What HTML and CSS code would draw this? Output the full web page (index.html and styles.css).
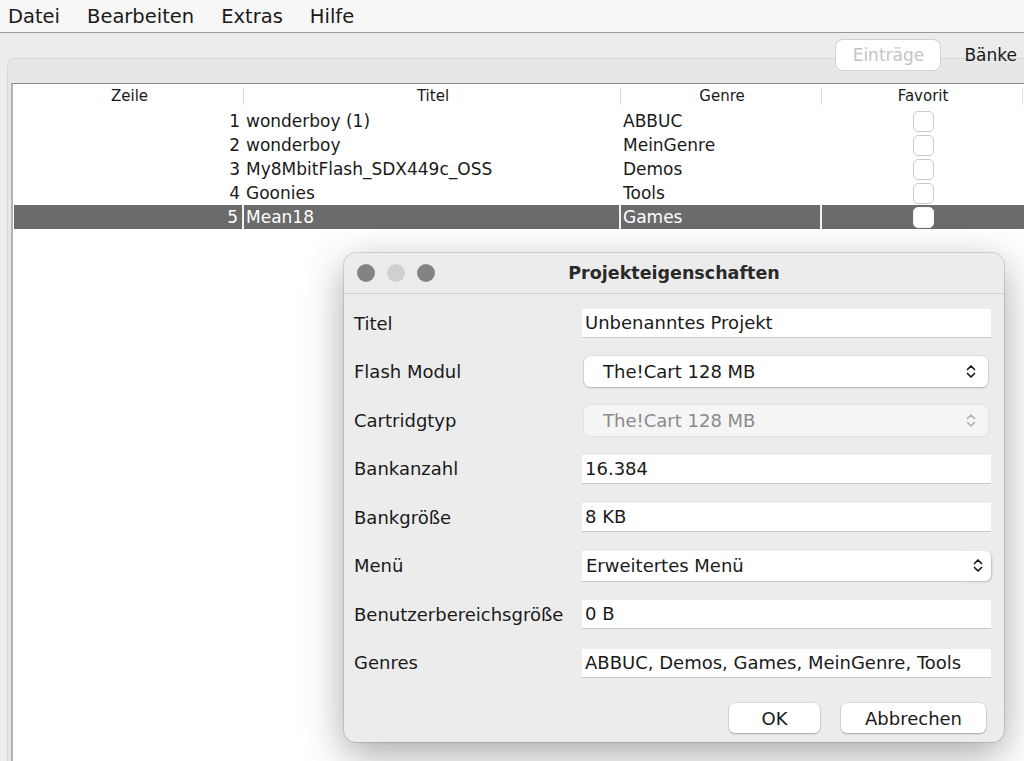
FILE: index.html
```html
<!DOCTYPE html>
<html lang="de">
<head>
    <meta charset="UTF-8">
    <title>Projekt</title>
    <link rel="stylesheet" href="styles.css">
</head>
<body>

<div class="menubar">
    <span>Datei</span>
    <span>Bearbeiten</span>
    <span>Extras</span>
    <span>Hilfe</span>
</div>

<div class="main">
    <div class="pane">
        <div class="tabs">
            <span class="tab active">Einträge</span>
            <span class="tab">Bänke</span>
        </div>

        <div class="table">
            <div class="row head">
                <div class="cell">Zeile</div>
                <div class="cell">Titel</div>
                <div class="cell">Genre</div>
                <div class="cell">Favorit</div>
            </div>
            <div class="row">
                <div class="cell num">1</div>
                <div class="cell">wonderboy (1)</div>
                <div class="cell">ABBUC</div>
                <div class="cell check"><span class="box"></span></div>
            </div>
            <div class="row">
                <div class="cell num">2</div>
                <div class="cell">wonderboy</div>
                <div class="cell">MeinGenre</div>
                <div class="cell check"><span class="box"></span></div>
            </div>
            <div class="row">
                <div class="cell num">3</div>
                <div class="cell">My8MbitFlash_SDX449c_OSS</div>
                <div class="cell">Demos</div>
                <div class="cell check"><span class="box"></span></div>
            </div>
            <div class="row">
                <div class="cell num">4</div>
                <div class="cell">Goonies</div>
                <div class="cell">Tools</div>
                <div class="cell check"><span class="box"></span></div>
            </div>
            <div class="row selected">
                <div class="cell num">5</div>
                <div class="cell">Mean18</div>
                <div class="cell">Games</div>
                <div class="cell check"><span class="box"></span></div>
            </div>
        </div>
    </div>
</div>

<!-- properties window -->
<div class="dialog">
    <div class="titlebar">
        <div class="lights">
            <span class="light dark"></span>
            <span class="light"></span>
            <span class="light dark"></span>
        </div>
        <div class="title">Projekteigenschaften</div>
    </div>

    <div class="form">
        <label>Titel</label>
        <div class="field">Unbenanntes Projekt</div>

        <label>Flash Modul</label>
        <div class="combo">
            <span>The!Cart 128 MB</span>
            <svg class="arrows" width="10" height="15" viewBox="0 0 10 15"><path d="M1.5 5.5 L5 2 L8.5 5.5 M1.5 9.5 L5 13 L8.5 9.5" fill="none" stroke="#1a1a1a" stroke-width="1.7" stroke-linecap="round" stroke-linejoin="round"/></svg>
        </div>

        <label>Cartridgtyp</label>
        <div class="combo disabled">
            <span>The!Cart 128 MB</span>
            <svg class="arrows" width="10" height="15" viewBox="0 0 10 15"><path d="M1.5 5.5 L5 2 L8.5 5.5 M1.5 9.5 L5 13 L8.5 9.5" fill="none" stroke="#b0b0b0" stroke-width="1.5" stroke-linecap="round" stroke-linejoin="round"/></svg>
        </div>

        <label>Bankanzahl</label>
        <div class="field">16.384</div>

        <label>Bankgröße</label>
        <div class="field">8 KB</div>

        <label>Menü</label>
        <div class="editcombo">
            <div class="edit">Erweitertes Menü</div>
            <div class="drop">
                <svg width="10" height="15" viewBox="0 0 10 15"><path d="M1.5 5.5 L5 2 L8.5 5.5 M1.5 9.5 L5 13 L8.5 9.5" fill="none" stroke="#1a1a1a" stroke-width="1.7" stroke-linecap="round" stroke-linejoin="round"/></svg>
            </div>
        </div>

        <label>Benutzerbereichsgröße</label>
        <div class="field">0 B</div>

        <label>Genres</label>
        <div class="field">ABBUC, Demos, Games, MeinGenre, Tools</div>
    </div>

    <div class="buttons">
        <button class="ok">OK</button>
        <button>Abbrechen</button>
    </div>
</div>

</body>
</html>
```

FILE: styles.css
```css
body {
    margin: 0;
    font-family: "DejaVu Sans", "Noto Sans", sans-serif;
    background-color: #ececec;
    color: #1a1a1a;
    height: 761px;
    overflow: hidden;
}
.menubar {
    height: 32px;
    background: #f7f7f7;
    border-bottom: 1px solid #9a9a9a;
    font-size: 19.5px;
    display: flex;
    align-items: center;
    padding-left: 8px;
}
.menubar span {
    margin-right: 27px;
}
.main {
    padding: 25px 0 0 7px;
}
.pane {
    position: relative;
    background: #e7e7e7;
    border-top: 1px solid #d8d8d8;
    border-left: 1px solid #d8d8d8;
    border-top-left-radius: 7px;
    padding: 24px 0 0 3px;
    height: 680px;
}
.tabs {
    position: absolute;
    top: -20px;
    right: 0;
    display: flex;
    align-items: center;
    font-size: 17px;
}
.tab {
    padding: 0 7px 0 13px;
    height: 30px;
    line-height: 30px;
}
.tab.active {
    width: 84px;
    padding: 0 10px;
    text-align: center;
    background: white;
    border: 1px solid #d2d2d2;
    border-radius: 8px;
    color: #c4c4c4;
    text-shadow: 0 1px 0 #fff;
    margin-right: 10px;
}
.table {
    background: white;
    border-top: 1px solid #8c8c8c;
    border-left: 2px solid #b4b4b4;
    height: 700px;
    padding-left: 1px;
}
.row {
    display: grid;
    grid-template-columns: 230px 377px 201px 201px;
    height: 24px;
    font-size: 17px;
    line-height: 24px;
}
.row.head {
    height: 25px;
    font-size: 15px;
}
.head .cell {
    text-align: center;
    border-right: 1px solid #dcdcdc;
    margin: 4px 0;
    line-height: 17px;
}
.cell {
    white-space: nowrap;
    overflow: hidden;
    padding-left: 2px;
}
.cell.num {
    text-align: right;
    padding-right: 4px;
}
.row.selected {
    background: #6b6b6b;
    color: white;
}
.row.selected .cell {
    border-right: 2px solid #f2f2f2;
}
.row.selected .cell:last-child {
    border-right: none;
}
.check {
    display: flex;
    justify-content: center;
    align-items: center;
}
.box {
    width: 19px;
    height: 19px;
    border: 1px solid #cbcbcb;
    border-radius: 5px;
    background: white;
}
.selected .box {
    border-color: #f4f4f4;
}

.dialog {
    position: absolute;
    left: 344px;
    top: 253px;
    width: 660px;
    height: 489px;
    background: #ececec;
    border-radius: 12px;
    box-shadow: 0 0 0 1px rgba(0, 0, 0, 0.12), 0 12px 40px rgba(0, 0, 0, 0.35);
    overflow: hidden;
}
.titlebar {
    position: relative;
    height: 40px;
    border-bottom: 1px solid #d3d3d3;
    display: flex;
    align-items: center;
    justify-content: center;
}
.lights {
    position: absolute;
    left: 13px;
    top: 11px;
    display: flex;
    gap: 12px;
}
.light {
    width: 18px;
    height: 18px;
    border-radius: 50%;
    background: #d0d0d0;
}
.light.dark {
    background: #838383;
}
.title {
    font-weight: bold;
    font-size: 17.5px;
    color: #2a2a2a;
}
.form {
    display: grid;
    grid-template-columns: 228px 409px;
    grid-auto-rows: 48.5px;
    align-items: center;
    padding: 5px 0 0 10px;
    font-size: 18px;
}
.field {
    height: 28px;
    line-height: 28px;
    background: white;
    box-shadow: 0 1px 0 #c9c9c9;
    padding-left: 3px;
    white-space: nowrap;
}
.combo {
    display: flex;
    align-items: center;
    justify-content: space-between;
    width: 404px;
    height: 31px;
    margin-left: 2px;
    padding: 0 12px 0 19px;
    box-sizing: border-box;
    background: white;
    border-radius: 6px;
    box-shadow: 0 0 0 0.5px rgba(0, 0, 0, 0.12), 0 1px 2px rgba(0, 0, 0, 0.2);
}
.combo.disabled {
    background: #f5f5f5;
    color: #8a8a8a;
    box-shadow: 0 0 0 0.5px rgba(0, 0, 0, 0.08);
}
.editcombo {
    display: flex;
    height: 30px;
    width: 409px;
}
.edit {
    flex: 1;
    background: white;
    line-height: 30px;
    padding-left: 4px;
    box-shadow: 0 1px 0 #c9c9c9;
}
.drop {
    width: 26px;
    background: white;
    border-radius: 0 6px 6px 0;
    box-shadow: 1px 1px 2px rgba(0, 0, 0, 0.2);
    display: flex;
    align-items: center;
    justify-content: center;
}
.buttons {
    display: flex;
    justify-content: flex-end;
    gap: 21px;
    padding: 16px 18px 0 0;
}
button {
    font-family: inherit;
    font-size: 18px;
    color: #1a1a1a;
    height: 30px;
    width: 145px;
    background: white;
    border: none;
    border-radius: 6px;
    box-shadow: 0 0 0 0.5px rgba(0, 0, 0, 0.12), 0 1px 2px rgba(0, 0, 0, 0.25);
}
button.ok {
    width: 91px;
}
```
